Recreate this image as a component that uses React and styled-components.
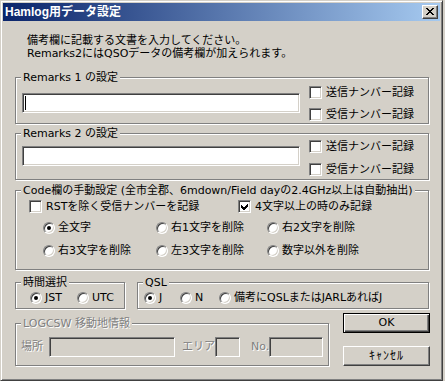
import React from 'react';
import styled, { createGlobalStyle, css } from 'styled-components';

const FACE = '#d4d0c8';

const GlobalStyle = createGlobalStyle`
  html, body { margin: 0; padding: 0; background: ${FACE}; }
  body {
    font-family: "DejaVu Sans", "Noto Sans CJK JP", sans-serif;
    font-size: 11px;
    color: #000;
    overflow: hidden;
  }
  #root { width: 445px; height: 381px; }
`;

const disabledText = css`
  color: #808080;
  text-shadow: 1px 1px 0 #fff;
`;

const Window = styled.div`
  box-sizing: border-box;
  width: 443px;
  height: 381px;
  background: ${FACE};
  border: 1px solid;
  border-color: ${FACE} #404040 #404040 ${FACE};
  box-shadow: inset 1px 1px 0 #fff, inset -1px -1px 0 #808080;
  padding: 2px;
  display: flex;
  flex-direction: column;
`;

const TitleBar = styled.div`
  flex: none;
  height: 18px;
  display: flex;
  align-items: center;
  justify-content: space-between;
  padding: 0 2px 0 2px;
  background: linear-gradient(to right, #0a246a, #a6caf0);
`;

const Title = styled.span`
  color: #fff;
  font-family: "Liberation Sans", "Noto Sans CJK JP", sans-serif;
  font-weight: bold;
  font-size: 12px;
  line-height: 18px;
  white-space: nowrap;
`;

const CloseButton = styled.div`
  box-sizing: border-box;
  width: 16px;
  height: 14px;
  background: ${FACE};
  border: 1px solid;
  border-color: #fff #404040 #404040 #fff;
  box-shadow: inset -1px -1px 0 #808080;
  display: flex;
  align-items: flex-start;
  justify-content: flex-start;
  padding: 2px 0 0 3px;
  svg { display: block; }
`;

const Body = styled.div`
  flex: 1;
  display: flex;
  flex-direction: column;
  padding: 0 11px 0 12px;
`;

const Intro = styled.p`
  margin: 13px 0 0 12px;
  line-height: 13px;
  white-space: nowrap;
`;

const Group = styled.div`
  position: relative;
  box-sizing: border-box;
  flex: ${p => (p.$grow ? '1 1 0' : 'none')};
  ${p => p.$w && css`width: ${p.$w}px;`}
  height: ${p => p.$h}px;
  margin-top: ${p => p.$mt || 0}px;
  padding: ${p => p.$pt || 0}px 0 0 ${p => p.$pl || 0}px;
  border: 1px solid #808080;
  box-shadow: inset 1px 1px 0 #fff, 1px 1px 0 #fff;
`;

const Legend = styled.span`
  position: absolute;
  top: -7px;
  left: 5px;
  padding: 0 2px;
  line-height: 13px;
  background: ${FACE};
  white-space: nowrap;
  ${p => p.$disabled && disabledText}
`;

const RemarksGroup = styled(Group)`
  display: grid;
  grid-template-columns: 278px auto;
  column-gap: 9px;
  align-items: start;
`;

const Field = styled.div`
  box-sizing: border-box;
  flex: none;
  width: ${p => p.$w}px;
  height: 20px;
  margin-top: ${p => p.$mt || 0}px;
  margin-right: ${p => p.$mr || 0}px;
  border: 1px solid;
  border-color: #808080 #fff #fff #808080;
  box-shadow: inset 1px 1px 0 #404040, inset -1px -1px 0 ${FACE};
  background: ${p => (p.$disabled ? FACE : '#fff')};
  display: flex;
  align-items: center;
`;

const Caret = styled.span`
  display: block;
  width: 1px;
  height: 14px;
  margin-left: 2px;
  background: #000;
`;

const CheckColumn = styled.div`
  display: flex;
  flex-direction: column;
  gap: ${p => p.$gap}px;
`;

const CheckItem = styled.div`
  display: flex;
  align-items: center;
  gap: 4px;
  height: 13px;
  line-height: 13px;
  white-space: nowrap;
`;

const Box = styled.span`
  position: relative;
  box-sizing: border-box;
  flex: none;
  width: 13px;
  height: 13px;
  background: #fff;
  border: 1px solid;
  border-color: #808080 #fff #fff #808080;
  box-shadow: inset 1px 1px 0 #404040, inset -1px -1px 0 ${FACE};
  svg { display: block; }
`;

const Radio = styled.span`
  position: relative;
  box-sizing: border-box;
  flex: none;
  width: 12px;
  height: 12px;
  border-radius: 50%;
  background: #fff;
  border: 1px solid;
  border-color: #808080 #fff #fff #808080;
  box-shadow: inset 1px 1px 0 #404040, inset -1px -1px 0 ${FACE};
  ${p =>
    p.$on &&
    css`
      &::after {
        content: '';
        position: absolute;
        left: 3px;
        top: 3px;
        width: 4px;
        height: 4px;
        border-radius: 50%;
        background: #000;
      }
    `}
`;

const RadioItem = styled.div`
  display: flex;
  align-items: center;
  gap: 3px;
  height: 14px;
  line-height: 14px;
  white-space: nowrap;
  ${p => p.$w && css`width: ${p.$w}px; flex: none;`}
`;

const CodeGroup = styled(Group)`
  display: flex;
  flex-direction: column;
`;

const CheckRow = styled.div`
  display: grid;
  grid-template-columns: 209px auto;
  padding-left: 13px;
`;

const RadioGrid = styled.div`
  display: grid;
  grid-template-columns: 113px 111px auto;
  row-gap: 9px;
  margin-top: 8px;
  padding-left: 27px;
`;

const GroupRow = styled.div`
  display: flex;
  gap: 12px;
  margin-top: ${p => p.$mt}px;
  align-items: flex-start;
`;

const RadioRow = styled(Group)`
  display: flex;
  align-items: flex-start;
`;

const BottomRow = styled.div`
  display: flex;
  align-items: flex-start;
  margin-top: 4px;
`;

const LocationGroup = styled(Group)`
  display: flex;
  align-items: flex-start;
`;

const FieldLabel = styled.span`
  flex: none;
  width: ${p => p.$w}px;
  line-height: 20px;
  white-space: nowrap;
  ${disabledText}
`;

const ButtonColumn = styled.div`
  display: flex;
  flex-direction: column;
  gap: 13px;
  margin-left: 14px;
`;

const Button = styled.div`
  box-sizing: border-box;
  width: 87px;
  height: 20px;
  display: flex;
  align-items: center;
  justify-content: center;
  background: ${FACE};
  line-height: 18px;
  font-size: ${p => p.$fs || 11}px;
  letter-spacing: ${p => p.$ls || 0}px;
  border: 1px solid;
  ${p =>
    p.$default
      ? css`
          border-color: #000;
          box-shadow: inset 1px 1px 0 #fff, inset -1px -1px 0 #404040, inset -2px -2px 0 #808080;
        `
      : css`
          border-color: #fff #404040 #404040 #fff;
          box-shadow: inset -1px -1px 0 #808080;
        `}
`;

const CloseGlyph = () => (
  <svg width="8" height="7" viewBox="0 0 8 7" shapeRendering="crispEdges">
    <path
      fill="#000"
      d="M0 0h2v1H0zM6 0h2v1H6zM1 1h2v1H1zM5 1h2v1H5zM2 2h4v1H2zM3 3h2v1H3zM2 4h4v1H2zM1 5h2v1H1zM5 5h2v1H5zM0 6h2v1H0zM6 6h2v1H6z"
    />
  </svg>
);

const CheckGlyph = () => (
  <svg width="11" height="11" viewBox="0 0 11 11" shapeRendering="crispEdges">
    <polygon fill="#000" points="2,4 4,6 5,6 9,2 9,5 5,9 4,9 2,7" />
  </svg>
);

const Check = ({ checked, children }) => (
  <CheckItem>
    <Box>{checked && <CheckGlyph />}</Box>
    <span>{children}</span>
  </CheckItem>
);

const Option = ({ on, w, children }) => (
  <RadioItem $w={w}>
    <Radio $on={on} />
    <span>{children}</span>
  </RadioItem>
);

const RemarksSection = ({ title, mt, pt, fieldMt, gap, caret }) => (
  <RemarksGroup $h={47} $mt={mt} $pt={pt} $pl={6}>
    <Legend>{title}</Legend>
    <Field $w={278} $mt={fieldMt}>{caret && <Caret />}</Field>
    <CheckColumn $gap={gap}>
      <Check>送信ナンバー記録</Check>
      <Check>受信ナンバー記録</Check>
    </CheckColumn>
  </RemarksGroup>
);

const codeOptions = [
  { label: '全文字', on: true },
  { label: '右1文字を削除' },
  { label: '右2文字を削除' },
  { label: '右3文字を削除' },
  { label: '左3文字を削除' },
  { label: '数字以外を削除' },
];

export default function App() {
  return (
    <>
      <GlobalStyle />
      <Window>
        <TitleBar>
          <Title>Hamlog用データ設定</Title>
          <CloseButton>
            <CloseGlyph />
          </CloseButton>
        </TitleBar>
        <Body>
          <Intro>
            備考欄に記載する文書を入力してください。
            <br />
            Remarks2にはQSOデータの備考欄が加えられます。
          </Intro>

          <RemarksSection title="Remarks 1 の設定" mt={17} pt={8} fieldMt={7} gap={9} caret />
          <RemarksSection title="Remarks 2 の設定" mt={9} pt={6} fieldMt={6} gap={10} />

          <CodeGroup $h={80} $mt={10} $pt={9}>
            <Legend>Code欄の手動設定 (全市全郡、6mdown/Field dayの2.4GHz以上は自動抽出)</Legend>
            <CheckRow>
              <Check>RSTを除く受信ナンバーを記録</Check>
              <Check checked>4文字以上の時のみ記録</Check>
            </CheckRow>
            <RadioGrid>
              {codeOptions.map(o => (
                <Option key={o.label} on={o.on}>
                  {o.label}
                </Option>
              ))}
            </RadioGrid>
          </CodeGroup>

          <GroupRow $mt={12}>
            <RadioRow $w={110} $h={27} $pt={8} $pl={14}>
              <Legend>時間選択</Legend>
              <Option on w={47}>JST</Option>
              <Option>UTC</Option>
            </RadioRow>
            <RadioRow $grow $h={27} $pt={8} $pl={6}>
              <Legend>QSL</Legend>
              <Option on w={36}>J</Option>
              <Option w={39}>N</Option>
              <Option>備考にQSLまたはJARLあればJ</Option>
            </RadioRow>
          </GroupRow>

          <BottomRow>
            <LocationGroup $w={314} $h={43} $mt={10} $pt={13} $pl={5}>
              <Legend $disabled>LOGCSW 移動地情報</Legend>
              <FieldLabel $w={28}>場所</FieldLabel>
              <Field $w={126} $mr={7} $disabled />
              <FieldLabel $w={33}>エリア</FieldLabel>
              <Field $w={25} $mr={11} $disabled />
              <FieldLabel $w={18}>No.</FieldLabel>
              <Field $w={54} $disabled />
            </LocationGroup>
            <ButtonColumn>
              <Button $default>OK</Button>
              <Button $fs={12} $ls={1}>ｷｬﾝｾﾙ</Button>
            </ButtonColumn>
          </BottomRow>
        </Body>
      </Window>
    </>
  );
}
